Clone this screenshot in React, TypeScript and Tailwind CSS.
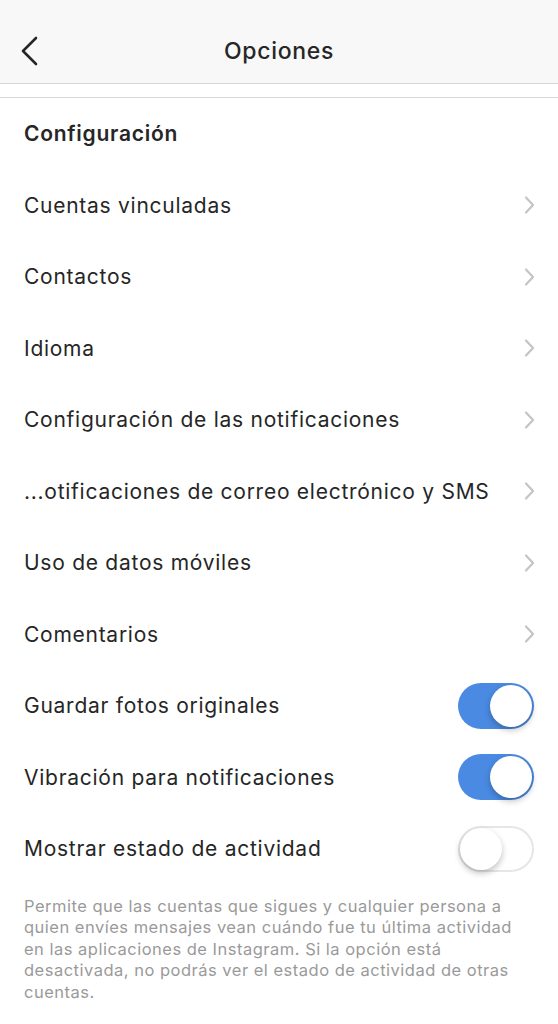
import { useState } from "react";

function Chevron() {
  return (
    <svg width="12" height="20" viewBox="0 0 12 20" fill="none">
      <path
        d="M2 2.5 L9 10 L2 17.5"
        stroke="#c4c4c8"
        strokeWidth="2.2"
        strokeLinecap="round"
        strokeLinejoin="round"
      />
    </svg>
  );
}

function Toggle({ on, onClick }: { on: boolean; onClick: () => void }) {
  return (
    <button
      type="button"
      onClick={onClick}
      className={
        on
          ? "relative h-[46px] w-[76px] rounded-full bg-[#4a8ae2]"
          : "relative h-[46px] w-[76px] rounded-full border-2 border-[#e6e6e6] bg-white"
      }
    >
      <span
        className={
          on
            ? "absolute right-[2px] top-[2px] h-[42px] w-[42px] rounded-full bg-white shadow-[0_3px_6px_rgba(0,0,0,0.25)]"
            : "absolute left-0 top-0 h-[42px] w-[42px] rounded-full bg-white shadow-[0_3px_6px_rgba(0,0,0,0.25)]"
        }
      />
    </button>
  );
}

const links = [
  "Cuentas vinculadas",
  "Contactos",
  "Idioma",
  "Configuración de las notificaciones",
  "...otificaciones de correo electrónico y SMS",
  "Uso de datos móviles",
  "Comentarios",
];

export default function App() {
  const [toggles, setToggles] = useState([true, true, false]);
  const labels = [
    "Guardar fotos originales",
    "Vibración para notificaciones",
    "Mostrar estado de actividad",
  ];

  return (
    <div
      className="min-h-[1024px] w-[558px] bg-white text-[#262626]"
      style={{ fontFamily: "Inter, 'Noto Sans', sans-serif" }}
    >
      <div className="relative flex h-[84px] items-center justify-center border-b border-[#d6d6d6] bg-[#f8f8f8]">
        <svg
          className="absolute left-[20px] top-[36px]"
          width="20"
          height="30"
          viewBox="0 0 20 30"
          fill="none"
        >
          <path
            d="M16 2 L3 15 L16 28"
            stroke="#262626"
            strokeWidth="2.6"
            strokeLinecap="round"
            strokeLinejoin="round"
          />
        </svg>
        <span className="mt-[20px] text-[23px] font-medium tracking-[0.03em]">
          Opciones
        </span>
      </div>
      <div className="h-[13px]" />
      <div className="border-t border-[#d6d6d6] tracking-[0.046em]">
        <div className="flex h-[71.5px] items-center px-[24px] text-[21px] font-semibold">
          Configuración
        </div>
        {links.map((l) => (
          <div
            key={l}
            className="flex h-[71.5px] items-center justify-between pl-[24px] pr-[22px] text-[21px]"
          >
            <span>{l}</span>
            <Chevron />
          </div>
        ))}
        {labels.map((l, i) => (
          <div
            key={l}
            className="flex h-[71.5px] items-center justify-between pl-[24px] pr-[24px] text-[21px]"
          >
            <span>{l}</span>
            <Toggle
              on={toggles[i]}
              onClick={() =>
                setToggles(toggles.map((t, j) => (j === i ? !t : t)))
              }
            />
          </div>
        ))}
        <p className="px-[24px] pt-[11px] text-[16.5px] leading-[21.5px] tracking-[0.03em] text-[#9a9a9a]">
          Permite que las cuentas que sigues y cualquier persona a quien envíes
          mensajes vean cuándo fue tu última actividad en las aplicaciones de
          Instagram. Si la opción está desactivada, no podrás ver el estado de
          actividad de otras cuentas.
        </p>
      </div>
    </div>
  );
}
